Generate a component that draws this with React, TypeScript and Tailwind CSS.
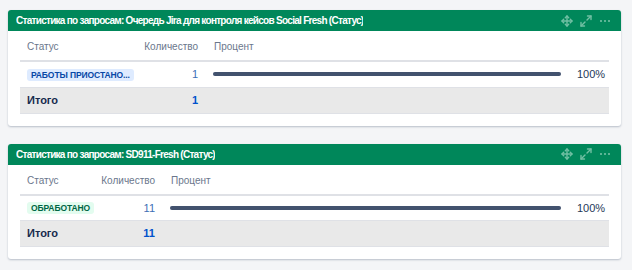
import { ReactNode } from 'react';

type Row = { status: string; tone: 'blue' | 'green'; count: number; percent: number };

interface GadgetProps {
  title: string;
  rows: Row[];
  total: number;
  statusWidth: string;
}

function MoveIcon() {
  return (
    <svg width="12" height="12" viewBox="0 0 12 12" fill="none" stroke="currentColor" strokeWidth="1.4" strokeLinecap="round" strokeLinejoin="round">
      <path d="M6 1v10M1 6h10" />
      <path d="M4.3 2.7 6 1l1.7 1.7M4.3 9.3 6 11l1.7-1.7M2.7 4.3 1 6l1.7 1.7M9.3 4.3 11 6 9.3 7.7" />
    </svg>
  );
}

function ExpandIcon() {
  return (
    <svg width="12" height="12" viewBox="0 0 12 12" fill="none" stroke="currentColor" strokeWidth="1.4" strokeLinecap="round" strokeLinejoin="round">
      <path d="M7 5l4-4M5 7l-4 4" />
      <path d="M7.5 1H11v3.5M1 7.5V11h3.5" />
    </svg>
  );
}

function MoreIcon() {
  return (
    <svg width="12" height="12" viewBox="0 0 12 12" fill="currentColor">
      <circle cx="2" cy="6" r="1.1" />
      <circle cx="6" cy="6" r="1.1" />
      <circle cx="10" cy="6" r="1.1" />
    </svg>
  );
}

function Lozenge({ tone, children }: { tone: 'blue' | 'green'; children: ReactNode }) {
  const cls =
    tone === 'blue'
      ? 'bg-[#deebff] text-[#0747a6]'
      : 'bg-[#e3fcef] text-[#006644]';
  return (
    <span className={cls + ' inline-block rounded-[3px] px-[4px] text-[8.5px] font-bold leading-[12px] tracking-[-0.1px] uppercase whitespace-nowrap'}>
      {children}
    </span>
  );
}

function Gadget({ title, rows, total, statusWidth }: GadgetProps) {
  return (
    <div className="bg-white rounded-[3px] shadow-[0_1px_2px_rgba(9,30,66,0.25)] overflow-hidden">
      <div className="h-[21px] bg-[#00875a] flex items-center justify-between pl-[8px] pr-[10px]">
        <h3 className="text-white text-[10px] font-bold tracking-[-0.72px] truncate">{title}</h3>
        <div className="flex items-center gap-[7px] text-[#72c0a4]">
          <MoveIcon />
          <ExpandIcon />
          <MoreIcon />
        </div>
      </div>
      <div className="px-[12px] pt-[4px] pb-[12px]">
        <table className="w-full table-fixed border-collapse text-[10px] text-[#172b4d]">
          <colgroup>
            <col className={statusWidth} />
            <col className="w-[65px]" />
            <col />
          </colgroup>
          <thead>
            <tr className="h-[26px] border-b-2 border-[#dfe1e6] text-[#6b778c]">
              <th className="text-left font-normal pl-[7px] pb-[2px]">Статус</th>
              <th className="text-right font-normal pr-[8px] pb-[2px]">Количество</th>
              <th className="text-left font-normal pl-[8px] pb-[2px]">Процент</th>
            </tr>
          </thead>
          <tbody>
            {rows.map(r => (
              <tr key={r.status} className="h-[26px] border-b border-[#dfe1e6]">
                <td className="pl-[7px]">
                  <Lozenge tone={r.tone}>{r.status}</Lozenge>
                </td>
                <td className="text-right pr-[8px] text-[11px] text-[#3d6fb5]">{r.count}</td>
                <td className="pl-[7px] pr-[7px]">
                  <div className="flex items-center gap-[16px]">
                    <div className="flex-1 h-[4px] rounded-full bg-[#dfe1e6]">
                      <div className="h-full rounded-full bg-[#42526e]" style={{ width: r.percent + '%' }} />
                    </div>
                    <span className="text-[11px] w-[25px] text-right text-[#253858]">{r.percent}%</span>
                  </div>
                </td>
              </tr>
            ))}
            <tr className="h-[26px] bg-[#e9e9e9] border-b border-[#dfe1e6]">
              <td className="pl-[7px] text-[11px] font-bold">Итого</td>
              <td className="text-right pr-[8px] text-[11px] font-bold text-[#0052cc]">{total}</td>
              <td />
            </tr>
          </tbody>
        </table>
      </div>
    </div>
  );
}

export default function App() {
  return (
    <div className="min-h-[270px] bg-[#f4f5f7] pt-[10px] pl-[8px] pr-[11px] flex flex-col gap-[18px] font-['Liberation_Sans',Arial,sans-serif]">
      <Gadget
        title="Статистика по запросам: Очередь Jira для контроля кейсов Social Fresh (Статус)"
        rows={[{ status: 'Работы приостано...', tone: 'blue', count: 1, percent: 100 }]}
        total={1}
        statusWidth="w-[121px]"
      />
      <Gadget
        title="Статистика по запросам: SD911-Fresh (Статус)"
        rows={[{ status: 'Обработано', tone: 'green', count: 11, percent: 100 }]}
        total={11}
        statusWidth="w-[78px]"
      />
    </div>
  );
}
